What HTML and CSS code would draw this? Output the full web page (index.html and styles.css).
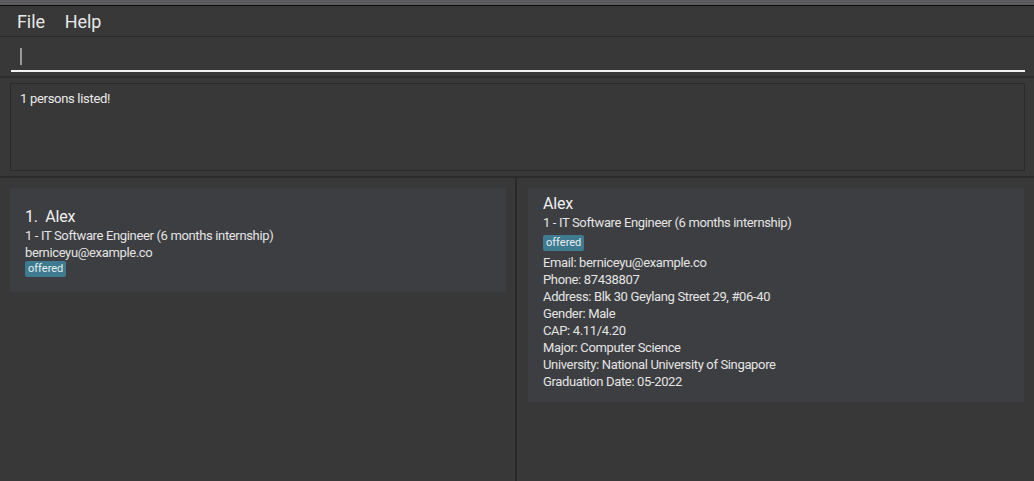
FILE: index.html
```html
<!DOCTYPE html>
<html>
<head>
<meta charset="utf-8">
<link rel="stylesheet" href="styles.css">
</head>
<body>
<div class="app">
  <div class="titlestrip"></div>
  <div class="menubar">
    <span class="menu">File</span>
    <span class="menu">Help</span>
  </div>
  <div class="command">
    <div class="input"><span class="caret"></span></div>
  </div>
  <div class="result">
    <div class="result-box">1 persons listed!</div>
  </div>
  <div class="lower">
    <div class="pane left">
      <div class="card list-card">
        <div class="name">1.&nbsp;&nbsp;Alex</div>
        <div class="line">1 - IT Software Engineer (6 months internship)</div>
        <div class="line">berniceyu@example.co</div>
        <div class="tags"><span class="tag">offered</span></div>
      </div>
    </div>
    <div class="pane right">
      <div class="card detail-card">
        <div class="name">Alex</div>
        <div class="line">1 - IT Software Engineer (6 months internship)</div>
        <div class="tags detail-tags"><span class="tag">offered</span></div>
        <div class="line">Email: berniceyu@example.co</div>
        <div class="line">Phone: 87438807</div>
        <div class="line">Address: Blk 30 Geylang Street 29, #06-40</div>
        <div class="line">Gender: Male</div>
        <div class="line">CAP: 4.11/4.20</div>
        <div class="line">Major: Computer Science</div>
        <div class="line">University: National University of Singapore</div>
        <div class="line">Graduation Date: 05-2022</div>
      </div>
    </div>
  </div>
</div>
</body>
</html>
```

FILE: styles.css
```css
html, body {
  margin: 0;
  padding: 0;
  background: #383838;
  font-family: Roboto, "Liberation Sans", Arial, sans-serif;
  color: #e6e6e6;
}
.app {
  width: 1034px;
  height: 481px;
  display: flex;
  flex-direction: column;
  overflow: hidden;
}
.titlestrip {
  height: 5px;
  background: #5c5b60;
  border-bottom: 1px solid #0c0c0c;
}
.menubar {
  height: 30px;
  display: flex;
  align-items: center;
  padding-left: 17px;
  gap: 20px;
  border-bottom: 1px solid #2c2c2c;
}
.menu {
  font-size: 18px;
  color: #e8e8e8;
  letter-spacing: -0.1px;
}
.command {
  height: 39px;
  padding: 0 9px 0 11px;
  border-bottom: 2px solid #2e2e2e;
  display: flex;
  flex-direction: column;
}
.input {
  margin-top: 10px;
  height: 23px;
  border-bottom: 2px solid #f2f2f2;
  position: relative;
}
.caret {
  position: absolute;
  left: 9px;
  top: 1px;
  width: 2px;
  height: 17px;
  background: #9a9a9a;
}
.result {
  height: 100px;
  padding: 5px 9px 0 10px;
  box-sizing: border-box;
  border-bottom: 2px solid #2b2b2b;
}
.result-box {
  height: 88px;
  box-sizing: border-box;
  border: 1px solid #2b2b2b;
  padding: 7px 9px;
  font-size: 13px;
  letter-spacing: -0.3px;
  color: #eaeaea;
}
.lower {
  flex: 1;
  display: flex;
}
.pane {
  padding-top: 10px;
  box-sizing: border-box;
}
.left {
  width: 517px;
  padding-left: 10px;
  padding-right: 9px;
  border-right: 2px solid #2a2a2a;
}
.right {
  flex: 1;
  padding-left: 11px;
  padding-right: 10px;
}
.card {
  background: #3d3e41;
}
.list-card {
  height: 104px;
  box-sizing: border-box;
  padding: 19px 15px 0 15px;
}
.detail-card {
  height: 214px;
  box-sizing: border-box;
  padding: 6px 15px 0 15px;
}
.name {
  font-size: 16px;
  line-height: 20px;
  color: #f0f0f0;
  letter-spacing: -0.2px;
}
.line {
  font-size: 13px;
  line-height: 17px;
  color: #e4e4e4;
  letter-spacing: -0.35px;
}
.tags {
  display: flex;
  height: 16px;
  margin-top: 0;
}
.detail-tags {
  margin-top: 4px;
  margin-bottom: 3px;
}
.tag {
  background: #3e7b91;
  color: #e8eef0;
  font-size: 11px;
  line-height: 15px;
  padding: 0 3px;
  border-radius: 2px;
}
```
